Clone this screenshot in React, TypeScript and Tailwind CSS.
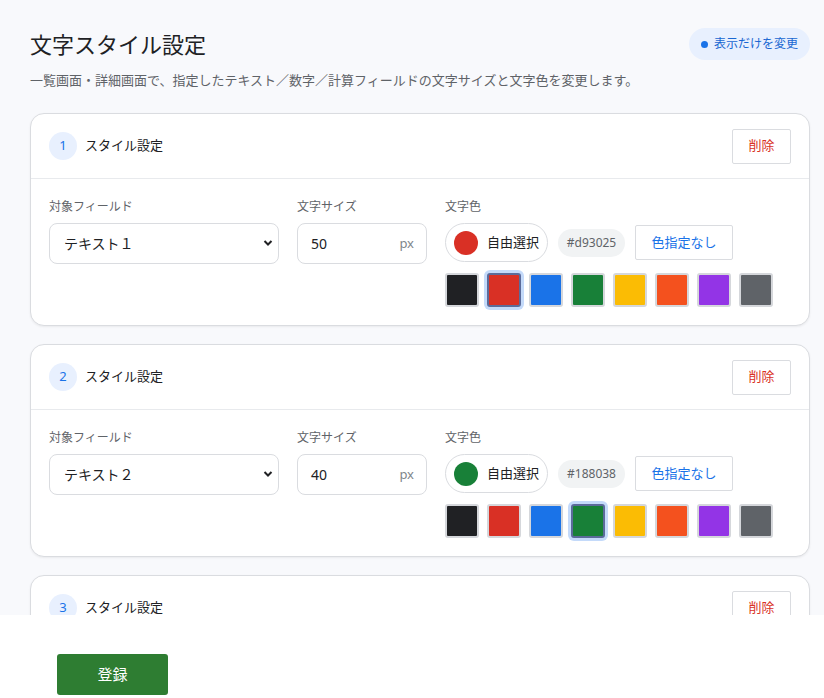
import * as React from "react"

const palette = [
  "#202124",
  "#d93025",
  "#1a73e8",
  "#188038",
  "#fbbc04",
  "#f4511e",
  "#9334e6",
  "#5f6368",
]

type Rule = { id: number; field: string; size: string; color: string }

const rules: Rule[] = [
  { id: 1, field: "テキスト１", size: "50", color: "#d93025" },
  { id: 2, field: "テキスト２", size: "40", color: "#188038" },
  { id: 3, field: "テキスト３", size: "30", color: "#1a73e8" },
]

function StyleCard({ rule }: { rule: Rule }) {
  return (
    <div className="rounded-[14px] border border-[#dadce0] bg-white shadow-[0_1px_2px_rgba(60,64,67,0.08)]">
      <div className="flex h-[65px] items-center justify-between border-b border-[#e8eaed] px-[18px]">
        <div className="flex items-center gap-2">
          <span className="flex h-[28px] w-[28px] items-center justify-center rounded-full bg-[#e8f0fe] text-[13px] text-[#1a73e8]">
            {rule.id}
          </span>
          <span className="text-[13px] text-[#202124]">スタイル設定</span>
        </div>
        <button className="h-[35px] w-[59px] rounded-[2px] border border-[#dadce0] bg-white text-[13px] text-[#d93025]">
          削除
        </button>
      </div>
      <div className="flex gap-[18px] px-[18px] pb-[18px] pt-[19px]">
        <div className="flex w-[230px] flex-col">
          <label className="mb-[8px] text-[12px] leading-[17px] text-[#5f6368]">対象フィールド</label>
          <div className="relative">
            <select
              defaultValue={rule.field}
              className="h-[41px] w-full appearance-none rounded-[8px] border border-[#dadce0] bg-white pl-[14px] text-[14px] text-[#202124] outline-none"
            >
              <option>{rule.field}</option>
            </select>
            <svg
              className="pointer-events-none absolute right-[6px] top-[16px]"
              width="10"
              height="8"
              viewBox="0 0 10 8"
            >
              <path d="M1.5 2 L5 5.5 L8.5 2" fill="none" stroke="#202124" strokeWidth="2" />
            </svg>
          </div>
        </div>
        <div className="flex w-[130px] flex-col">
          <label className="mb-[8px] text-[12px] leading-[17px] text-[#5f6368]">文字サイズ</label>
          <div className="flex h-[41px] items-center justify-between rounded-[8px] border border-[#dadce0] bg-white pl-[13px] pr-[12px]">
            <span className="text-[14px] text-[#202124]">{rule.size}</span>
            <span className="text-[13px] text-[#80868b]">px</span>
          </div>
        </div>
        <div className="flex flex-col">
          <label className="mb-[8px] text-[12px] leading-[17px] text-[#5f6368]">文字色</label>
          <div className="flex h-[39px] items-center">
            <div className="flex h-[39px] items-center gap-[9px] rounded-full border border-[#dadce0] bg-white pl-[8px] pr-[8px]">
              <span className="h-[24px] w-[24px] rounded-full" style={{ backgroundColor: rule.color }} />
              <span className="text-[13px] text-[#202124]">自由選択</span>
            </div>
            <span className="ml-[10px] flex h-[28px] w-[67px] items-center justify-center rounded-full bg-[#f1f3f4] text-[12px] text-[#5f6368]">
              {rule.color}
            </span>
            <button className="ml-[10px] h-[35px] w-[98px] rounded-[2px] border border-[#dadce0] bg-white text-[13px] text-[#1a73e8]">
              色指定なし
            </button>
          </div>
          <div className="mt-[11px] flex gap-[8px]">
            {palette.map((c) => (
              <span
                key={c}
                className={
                  c === rule.color
                    ? "h-[34px] w-[34px] rounded-[3px] border-2 border-[#5b6b9a] ring-[3px] ring-[#c4dafa]"
                    : "h-[34px] w-[34px] rounded-[3px] border-2 border-[#d5d7db]"
                }
                style={{ backgroundColor: c }}
              />
            ))}
          </div>
        </div>
      </div>
    </div>
  )
}

export default function App() {
  return (
    <div className="flex h-[698px] w-[824px] flex-col bg-[#f8f9fc] font-['Noto_Sans','Noto_Sans_CJK_JP',sans-serif]">
      <div className="h-[615px] overflow-hidden pl-[30px] pr-[14px] pt-[28px]">
        <div className="flex h-[32px] items-center justify-between">
          <h1 className="text-[22px] text-[#202124]">文字スタイル設定</h1>
          <span className="flex h-[32px] items-center gap-[6px] rounded-full bg-[#e8f0fe] px-[12px] text-[12px] text-[#1967d2]">
            <span className="h-[7px] w-[7px] rounded-full bg-[#1a73e8]" />
            表示だけを変更
          </span>
        </div>
        <p className="mt-[10px] text-[13px] leading-[20px] text-[#5f6368]">
          一覧画面・詳細画面で、指定したテキスト／数字／計算フィールドの文字サイズと文字色を変更します。
        </p>
        <div className="mt-[23px] flex flex-col gap-[18px]">
          {rules.map((r) => (
            <StyleCard key={r.id} rule={r} />
          ))}
        </div>
      </div>
      <div className="flex-1 bg-white pl-[57px] pt-[39px]">
        <button className="h-[41px] w-[111px] rounded-[3px] bg-[#2e7d32] text-[15px] text-white">
          登録
        </button>
      </div>
    </div>
  )
}
